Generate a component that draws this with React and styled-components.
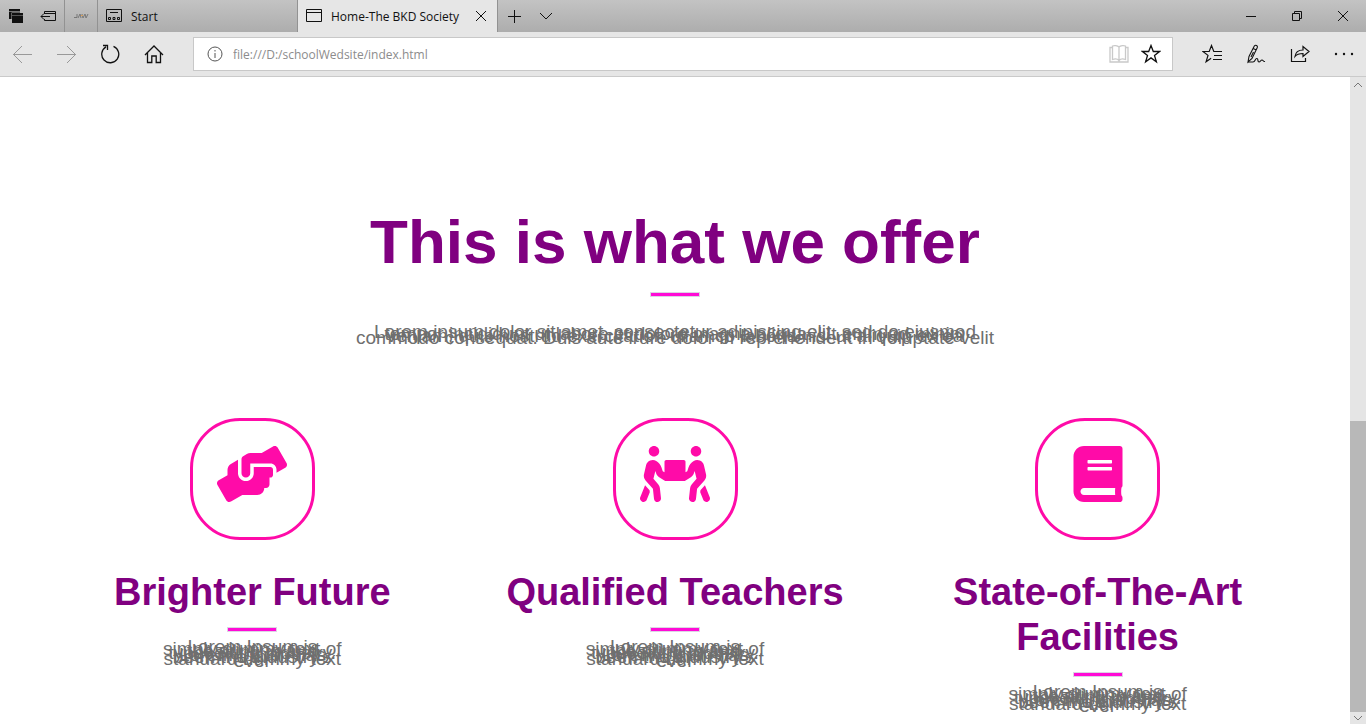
import React from "react";
import styled, { createGlobalStyle } from "styled-components";
import { FaHandsHelping, FaPeopleCarry, FaBook } from "react-icons/fa";

const GlobalStyle = createGlobalStyle`
  *, *::before, *::after { box-sizing: border-box; }
  body { margin: 0; background: #fff; font-family: "Liberation Sans", Arial, sans-serif; }
  button { border: 0; padding: 0; background: none; color: inherit; font: inherit; }
  svg { display: block; }
`;

const Browser = styled.div`
  display: flex;
  flex-direction: column;
  height: 100vh;
  overflow: hidden;
`;

const TitleBar = styled.header`
  display: flex;
  flex: 0 0 32px;
  background: linear-gradient(#c3c3c3, #adadad);
  color: #111;
  font-family: "Open Sans", "Noto Sans", sans-serif;
  font-size: 12px;
`;

const TabTools = styled.div`
  display: flex;
  width: 65px;
  border-right: 1px solid #929292;
`;

const BarButton = styled.button`
  display: flex;
  align-items: center;
  justify-content: center;
  width: ${(p) => p.$width}px;
  height: 32px;
`;

const PinnedTab = styled(BarButton)`
  border-right: 1px solid #929292;
  color: #777;
`;

const Tab = styled.div`
  display: flex;
  align-items: center;
  width: 200px;
  height: 32px;
  padding: 0 8px;
  border-right: 1px solid #929292;
  background: ${(p) => (p.$active ? "#e6e6e6" : "transparent")};
`;

const TabLabel = styled.button`
  display: flex;
  flex: 1;
  align-items: center;
  gap: 9px;
  white-space: nowrap;
`;

const WindowControls = styled.div`
  display: flex;
  margin-left: auto;
`;

const Toolbar = styled.nav`
  display: flex;
  flex: 0 0 45px;
  align-items: center;
  border-bottom: 1px solid #cacaca;
  background: #e6e6e6;
`;

const ToolButton = styled.button`
  display: flex;
  align-items: center;
  justify-content: center;
  width: 44px;
  height: 44px;
  color: ${(p) => (p.$muted ? "#999" : "#111")};
`;

const AddressBar = styled.form`
  display: flex;
  flex: 1;
  align-items: center;
  height: 34px;
  margin: 0 17px;
  padding: 0 11px 0 13px;
  border: 1px solid #c8c8c8;
  background: #fff;
`;

const AddressInput = styled.input`
  flex: 1;
  min-width: 0;
  padding: 0 10px;
  border: 0;
  outline: 0;
  background: transparent;
  color: #8c8c8c;
  font: 12px "Open Sans", "Noto Sans", sans-serif;
`;

const AddressActions = styled.div`
  display: flex;
  gap: 12px;
`;

const Viewport = styled.div`
  display: flex;
  flex: 1;
  min-height: 0;
`;

const Page = styled.main`
  flex: 1;
  min-width: 0;
  padding: 128px 3% 0;
  overflow: hidden;
  background: #fff;
  text-align: center;
`;

const Title = styled.h1`
  margin: 0;
  color: purple;
  font-size: 62px;
  line-height: 74px;
`;

const Rule = styled.hr`
  width: 50px;
  height: 5px;
  margin: ${(p) => p.$top}px auto 0;
  border: 1px solid #dcd4e4;
  background: #ff0bd6;
`;

const Copy = styled.p`
  max-width: ${(p) => p.$width}px;
  margin: ${(p) => p.$top}px auto 0;
  color: #6f6f6f;
  font-size: 19px;
  line-height: 2px;
`;

const Offers = styled.section`
  display: grid;
  grid-template-columns: repeat(3, 1fr);
  margin-top: 79px;
`;

const Offer = styled.article`
  display: flex;
  flex-direction: column;
  align-items: center;
`;

const Badge = styled.div`
  display: flex;
  align-items: flex-start;
  justify-content: center;
  width: 125px;
  height: 122px;
  padding-top: 25px;
  border: 3px solid #ff0ba8;
  border-radius: 50px;
  color: #ff0ba8;

  svg { width: 70px; height: 56px; }
`;

const OfferTitle = styled.h2`
  margin: 30px 0 0;
  color: purple;
  font-size: 38px;
  line-height: 45px;
`;

const Scrollbar = styled.div`
  display: flex;
  flex: 0 0 16px;
  flex-direction: column;
  background: #e5e5e5;
  color: #777;
`;

const ScrollButton = styled.button`
  display: flex;
  flex: 0 0 ${(p) => p.$height}px;
  align-items: center;
  justify-content: center;
`;

const ScrollTrack = styled.div`
  display: flex;
  flex: 1;
  flex-direction: column;
  justify-content: flex-end;
`;

const ScrollThumb = styled.div`
  height: 47%;
  background: #b8b8b8;
`;

const Line = ({ w = 16, h = 16, children, sw = 1, ...rest }) => (
  <svg width={w} height={h} viewBox={`0 0 ${w} ${h}`} fill="none" stroke="currentColor" strokeWidth={sw} aria-hidden="true" {...rest}>
    {children}
  </svg>
);

const TabsAsideIcon = () => (
  <Line w={16} h={16}>
    <path d="M1 1h11v10H1z" fill="currentColor" stroke="none" />
    <path d="M1 3.500h11" stroke="#777" />
    <path d="M3.500 4.500h12v10h-12z" fill="#b7b7b7" stroke="none" />
    <path d="M4 5h11v10H4z" fill="currentColor" stroke="none" />
    <path d="M4 7.500h11" stroke="#555" />
  </Line>
);

const SetAsideIcon = () => (
  <Line w={16} h={12}>
    <path d="M4.500 4V1.500h11v9h-11V9M4.500 3.500h11M1 6.500h9M4 3.500L1 6.500l3 3" />
  </Line>
);

const StartIcon = () => (
  <Line w={16} h={14}>
    <path d="M.5.5h15v12H.5zM4 3.500h8" />
    <path d="M2.500 8.500h2v2h-2zM7 8.500h2v2H7zM11.500 8.500h2v2h-2z" />
  </Line>
);

const PageIcon = () => (
  <Line w={16} h={14}>
    <path d="M.5.5h15v12H.5zM.5 3.500h15" />
  </Line>
);

const StarPath = "M10 1.500l2.300 6h6.200l-5 3.900 1.900 6.400-5.400-3.900-5.400 3.900 1.900-6.400-5-3.900h6.200z";

const Chevron = ({ up, w = 14 }) => (
  <Line w={w} h={w / 2 + 1}>
    <path d={up ? `M1 ${w / 2}L${w / 2} 1l${w / 2 - 1} ${w / 2 - 1}` : `M1 1l${w / 2 - 1} ${w / 2 - 1}L${w - 1} 1`} />
  </Line>
);

const lorem =
  "Lorem Ipsum is simply dummy text of the printing and typesetting industry. Lorem Ipsum has been the industry's standard dummy text ever";

const offers = [
  { title: "Brighter Future", Icon: FaHandsHelping },
  { title: "Qualified Teachers", Icon: FaPeopleCarry },
  { title: "State-of-The-Art Facilities", Icon: FaBook },
];

export default function App() {
  return (
    <Browser>
      <GlobalStyle />
      <TitleBar>
        <TabTools>
          <BarButton $width={32} aria-label="Tabs set aside"><TabsAsideIcon /></BarButton>
          <BarButton $width={32} aria-label="Set tabs aside"><SetAsideIcon /></BarButton>
        </TabTools>
        <PinnedTab $width={33} aria-label="Pinned tab">
          <Line w={16} h={6}>
            <path d="M1 4.500h3V1M5 5l2-4 1 4M9 1l1 4 2-4 1 4 2-4" />
            <path d="M8 2.500h2" stroke="#d9a05a" />
          </Line>
        </PinnedTab>
        <Tab>
          <TabLabel><StartIcon />Start</TabLabel>
        </Tab>
        <Tab $active>
          <TabLabel><PageIcon />Home-The BKD Society</TabLabel>
          <button aria-label="Close tab">
            <Line w={16} h={12}><path d="M3 1l10 10M13 1L3 11" /></Line>
          </button>
        </Tab>
        <BarButton $width={32} aria-label="New tab">
          <Line w={14} h={14}><path d="M7.500 1v13M1 7.500h13" /></Line>
        </BarButton>
        <BarButton $width={32} aria-label="Tab list"><Chevron /></BarButton>
        <WindowControls>
          <BarButton $width={46} aria-label="Minimize">
            <Line w={10} h={10}><path d="M0 5.500h10" /></Line>
          </BarButton>
          <BarButton $width={46} aria-label="Restore">
            <Line w={10} h={10}><path d="M.5 2.500h7v7h-7zM2.500 2.500v-2h7v7h-2" /></Line>
          </BarButton>
          <BarButton $width={46} aria-label="Close">
            <Line w={10} h={10}><path d="M0 0l10 10M10 0L0 10" /></Line>
          </BarButton>
        </WindowControls>
      </TitleBar>

      <Toolbar>
        <ToolButton $muted aria-label="Back">
          <Line w={20} h={20}><path d="M1 10.500h19M10 2L1.500 10.500 10 19" /></Line>
        </ToolButton>
        <ToolButton $muted aria-label="Forward">
          <Line w={20} h={20}><path d="M1 10.500h19M11 2l8.500 8.500L11 19" /></Line>
        </ToolButton>
        <ToolButton aria-label="Refresh">
          <Line w={20} h={20} sw={1.3}>
            <path d="M13.500 2.400A8.500 8.500 0 1 1 6 2.900M3 1.500h4.500v4.500" />
          </Line>
        </ToolButton>
        <ToolButton aria-label="Home">
          <Line w={20} h={20} sw={1.3}>
            <path d="M1 11l9-9 9 9M3.500 9v9.500h4.300v-6.500h4.400v6.500h4.300V9" />
          </Line>
        </ToolButton>
        <AddressBar onSubmit={(e) => e.preventDefault()}>
          <Line w={16} h={16} color="#555">
            <circle cx="8" cy="8" r="7" />
            <path d="M8 7v5M8 4v1.500" />
          </Line>
          <AddressInput aria-label="Address" defaultValue="file:///D:/schoolWedsite/index.html" />
          <AddressActions>
            <button type="button" aria-label="Reading view">
              <Line w={20} h={20} color="#c9c9c9" sw={1.3}>
                <path d="M10 3v15M10 3C8.500 1.300 5 1.300 3.500 2v13.500c2-.7 5-.7 6.500 1 1.500-1.700 4.500-1.700 6.500-1V2C15 1.300 11.500 1.300 10 3M3.500 3.500H1v14.500h18V3.500h-2.500" />
              </Line>
            </button>
            <button type="button" aria-label="Add to favorites">
              <Line w={20} h={20} color="#111" sw={1.3}><path d={StarPath} /></Line>
            </button>
          </AddressActions>
        </AddressBar>
        <ToolButton aria-label="Favorites">
          <Line w={20} h={20} sw={1.2}>
            <path d="M14 7.500h-2.200L9.500 1.500l-2.300 6H1l5 3.900-1.900 6.400 5-3.600M12 7.500h8M12 11.500h8M11 15.500h9" />
          </Line>
        </ToolButton>
        <ToolButton aria-label="Add notes">
          <Line w={20} h={20} sw={1.1}>
            <path d="M2 18l1-5.500L8.300 2c1.200-1.500 3.700-.4 3 1.500L6 14.500zM7 4.500l3.500 1.500M7.500 8L5 13" />
            <path d="M2 18h5c2.500 0 2-4 4-3.500 1.800.5 0 3.500 2 3.500 1.500 0 1.500-2 3-2s1 2 3 1.500" />
          </Line>
        </ToolButton>
        <ToolButton aria-label="Share">
          <Line w={20} h={20} sw={1.2}>
            <path d="M1.500 5v12.500h14V14M5 12.500c.5-4 3-6.500 8-6.500V2.500l6 5-6 5V9.500c-4 0-6 .5-8 3z" />
          </Line>
        </ToolButton>
        <ToolButton aria-label="More">
          <Line w={20} h={20} stroke="none">
            <g fill="currentColor"><circle cx="2" cy="10" r="1.200" /><circle cx="10" cy="10" r="1.200" /><circle cx="18" cy="10" r="1.200" /></g>
          </Line>
        </ToolButton>
      </Toolbar>

      <Viewport>
        <Page>
          <Title>This is what we offer</Title>
          <Rule $top={13} />
          <Copy $width={640} $top={34}>
            Lorem ipsum dolor sit amet, consectetur adipiscing elit, sed do eiusmod tempor incididunt ut labore et dolore
            magna aliqua. Ut enim ad minim veniam, quis nostrud exercitation ullamco laboris nisi ut aliquip ex ea commodo
            consequat. Duis aute irure dolor in reprehenderit in voluptate velit
          </Copy>
          <Offers>
            {offers.map(({ title, Icon }) => (
              <Offer key={title}>
                <Badge><Icon aria-hidden="true" /></Badge>
                <OfferTitle>{title}</OfferTitle>
                <Rule $top={12} />
                <Copy $width={180} $top={14}>{lorem}</Copy>
              </Offer>
            ))}
          </Offers>
        </Page>
        <Scrollbar>
          <ScrollButton $height={16} aria-label="Scroll up"><Chevron up w={10} /></ScrollButton>
          <ScrollTrack><ScrollThumb /></ScrollTrack>
          <ScrollButton $height={12} aria-label="Scroll down"><Chevron w={10} /></ScrollButton>
        </Scrollbar>
      </Viewport>
    </Browser>
  );
}
